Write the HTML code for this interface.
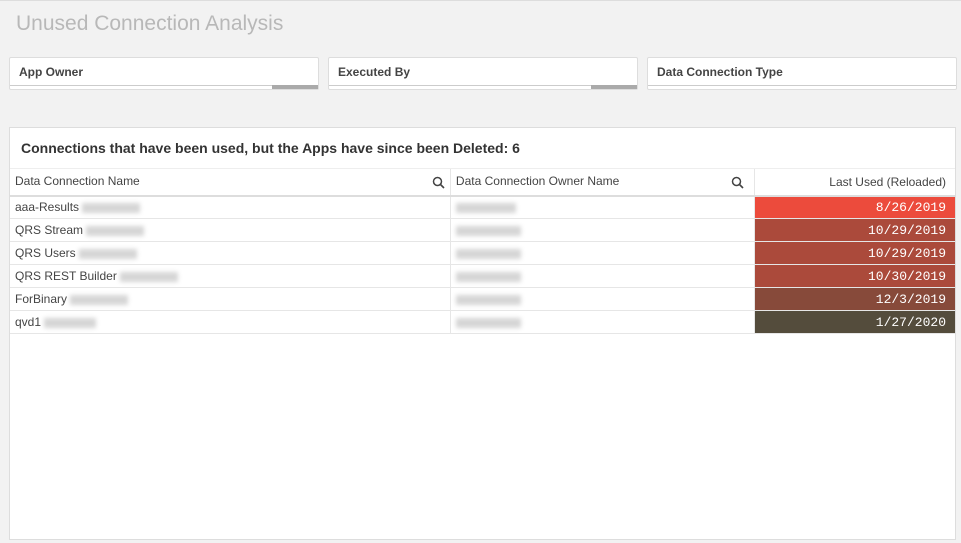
<!DOCTYPE html>
<html><head><style>
*{box-sizing:border-box;margin:0;padding:0}
body{width:961px;height:543px;background:#f2f2f2;font-family:"Liberation Sans",sans-serif;position:relative;overflow:hidden;border-top:1px solid #ddd}
.t{position:absolute;left:16px;top:11px;font-size:21px;color:#b8b8b8}
.f{position:absolute;top:56px;width:310px;height:33px;background:#fff;border:1px solid #ddd;border-radius:2px}
.f b{position:absolute;left:9px;top:7px;font-size:12px;color:#444}
.f i{position:absolute;left:0;right:0;bottom:3px;border-top:1px solid #ccc}
.f s{position:absolute;right:0;bottom:0;width:46px;height:4px;background:#aaa}
.p{position:absolute;left:9px;top:126px;width:947px;height:413px;background:#fff;border:1px solid #ddd}
.h{position:absolute;left:11px;top:12px;font-size:14px;font-weight:bold;color:#333}
table{position:absolute;left:0;top:40px;border-collapse:collapse;font-size:12px;color:#444}
td{height:23px;border-bottom:1px solid #e6e6e6;padding:0 5px;white-space:nowrap}
tr.hd td{height:27px;border-bottom:2px solid #ddd;border-top:1px solid #eee}
td.c2{border-left:1px solid #e6e6e6}
td.c3{border-left:1px solid #e6e6e6;text-align:right;font-family:"Liberation Mono",monospace;font-size:13px;color:#fff;padding-right:9px}
tr.hd td.c3{font-family:"Liberation Sans",sans-serif;font-size:12px;color:#444}
.bl{display:inline-block;height:10px;background:#ccc;filter:blur(2px);vertical-align:middle;opacity:.8}
svg{float:right;margin-top:2px}
</style></head><body>
<div class="t">Unused Connection Analysis</div>
<div class="f" style="left:9px"><b>App Owner</b><i></i><s></s></div>
<div class="f" style="left:328px"><b>Executed By</b><i></i><s></s></div>
<div class="f" style="left:647px"><b>Data Connection Type</b><i></i></div>
<div class="p"><div class="h">Connections that have been used, but the Apps have since been Deleted: 6</div>
<table>
<tr class="hd"><td style="width:441px">Data Connection Name<svg width="13" height="13" viewBox="0 0 13 13"><circle cx="5.5" cy="5.5" r="4" fill="none" stroke="#444" stroke-width="1.5"/><path d="M8.5 8.5L12 12" stroke="#444" stroke-width="1.6"/></svg></td><td class="c2" style="width:304px">Data Connection Owner Name<svg width="13" height="13" viewBox="0 0 13 13" style="margin-right:5px"><circle cx="5.5" cy="5.5" r="4" fill="none" stroke="#444" stroke-width="1.5"/><path d="M8.5 8.5L12 12" stroke="#444" stroke-width="1.6"/></svg></td><td class="c3" style="width:201px">Last Used (Reloaded)</td></tr>
<tr><td>aaa-Results <span class="bl" style="width:58px"></span></td><td class="c2"><span class="bl" style="width:60px"></span></td><td class="c3" style="background:#ec4b3c">8/26/2019</td></tr>
<tr><td>QRS Stream <span class="bl" style="width:58px"></span></td><td class="c2"><span class="bl" style="width:65px"></span></td><td class="c3" style="background:#ab4a3b">10/29/2019</td></tr>
<tr><td>QRS Users <span class="bl" style="width:58px"></span></td><td class="c2"><span class="bl" style="width:65px"></span></td><td class="c3" style="background:#ab4a3b">10/29/2019</td></tr>
<tr><td>QRS REST Builder <span class="bl" style="width:58px"></span></td><td class="c2"><span class="bl" style="width:65px"></span></td><td class="c3" style="background:#ab4a3b">10/30/2019</td></tr>
<tr><td>ForBinary <span class="bl" style="width:58px"></span></td><td class="c2"><span class="bl" style="width:65px"></span></td><td class="c3" style="background:#874a3a">12/3/2019</td></tr>
<tr><td>qvd1 <span class="bl" style="width:52px"></span></td><td class="c2"><span class="bl" style="width:65px"></span></td><td class="c3" style="background:#544c3c">1/27/2020</td></tr>
</table></div>
</body></html>
